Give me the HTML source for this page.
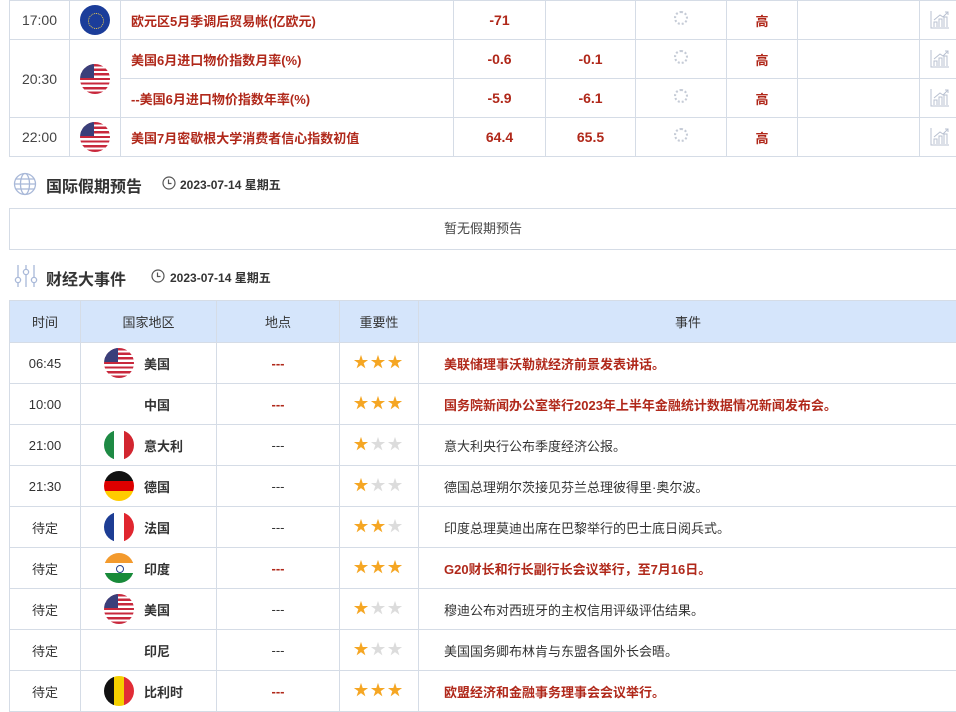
<!DOCTYPE html>
<html><head><meta charset="utf-8"><style>
*{margin:0;padding:0;box-sizing:border-box}
body{width:956px;height:712px;overflow:hidden;background:#fff;font-family:"Liberation Sans","Noto Sans CJK SC",sans-serif;font-size:13px;color:#333;position:relative}
table{border-collapse:collapse;table-layout:fixed;position:absolute;left:9px}
td,th{border:1px solid #d5dce6;text-align:center;vertical-align:middle;padding:0}
.r{color:#b0281a;font-weight:bold}
.flag{display:inline-block;width:30px;height:30px;border-radius:50%;overflow:hidden;vertical-align:middle;position:relative}
.us{background:repeating-linear-gradient(#c8283c 0 2.3px,#fff 2.3px 4.6px)}
.us:before{content:"";position:absolute;left:0;top:0;width:14px;height:14px;background:#3a3f7a}
.eu{background:#1b3d9a}
.eu:after{content:"";position:absolute;left:8px;top:8px;width:14px;height:14px;border-radius:50%;border:1px dotted #f5d24a}
.it{background:linear-gradient(90deg,#1e8a44 33%,#fff 33% 66%,#d22630 66%)}
.de{background:linear-gradient(#111 33%,#dd0000 33% 66%,#ffcc00 66%)}
.fr{background:linear-gradient(90deg,#1d3d94 33%,#fff 33% 66%,#e0262f 66%)}
.in{background:linear-gradient(#f39a2d 33%,#fff 33% 66%,#188a3a 66%)}
.in:after{content:"";position:absolute;left:12px;top:12px;width:6px;height:6px;border-radius:50%;border:1px solid #223f8a}
.be{background:linear-gradient(90deg,#111 33%,#f5d000 33% 66%,#e12c36 66%)}
.spin{display:inline-block;width:14px;height:14px;border-radius:50%;border:2px dotted #c5cbd6;margin-top:-8px}
.c{display:flex;align-items:center;padding-left:23px;gap:10px;font-weight:bold;color:#333}
.c .n{width:30px}
.st{color:#f5a623;font-size:15px;letter-spacing:2px;padding-bottom:4px}
.st i{font-style:normal;color:#dcdcdc}
.ev{text-align:left;padding-left:25px}
.hd{position:absolute;font-size:16px;font-weight:bold;color:#333}
.dt{position:absolute;font-size:12px;font-weight:bold;color:#333}
</style></head><body>
<svg width="0" height="0" style="position:absolute"><defs><symbol id="ch" viewBox="0 0 20 20"><g fill="none" stroke="#b8c0d0" stroke-width="1"><path d="M1 2V19H19"/><path d="M4 18V13H7V18M9 18V10H12V18M14 18V8H17V18"/><path d="M4 11L10 6L13 8L18 3M15 3H18V6"/></g></symbol><symbol id="ck" viewBox="0 0 14 14"><circle cx="7" cy="7" r="6" fill="none" stroke="#555" stroke-width="1.2"/><path d="M6.5 3.5V7.5H9.5" fill="none" stroke="#555" stroke-width="1.2"/></symbol></defs></svg>
<div style="position:absolute;left:9px;top:0;width:947px;height:1px;background:#d08070"></div>
<table style="top:0;width:957px">
<colgroup><col style="width:60px"><col style="width:51px"><col style="width:333px"><col style="width:92px"><col style="width:90px"><col style="width:91px"><col style="width:71px"><col style="width:122px"><col style="width:47px"></colgroup>
<tr style="height:39px"><td style="color:#444;font-size:14px">17:00</td><td><span class="flag eu"></span></td><td class="r" style="text-align:left;padding-left:10px">欧元区5月季调后贸易帐(亿欧元)</td><td class="r" style="font-size:14px">-71</td><td></td><td><span class="spin"></span></td><td class="r">高</td><td></td><td style="text-align:left;padding-left:10px"><svg width="20" height="20"><use href="#ch"/></svg></td></tr>
<tr style="height:39px"><td rowspan="2" style="color:#444;font-size:14px">20:30</td><td rowspan="2"><span class="flag us"></span></td><td class="r" style="text-align:left;padding-left:10px">美国6月进口物价指数月率(%)</td><td class="r" style="font-size:14px">-0.6</td><td class="r" style="font-size:14px">-0.1</td><td><span class="spin"></span></td><td class="r">高</td><td></td><td style="text-align:left;padding-left:10px"><svg width="20" height="20"><use href="#ch"/></svg></td></tr>
<tr style="height:39px"><td class="r" style="text-align:left;padding-left:10px">--美国6月进口物价指数年率(%)</td><td class="r" style="font-size:14px">-5.9</td><td class="r" style="font-size:14px">-6.1</td><td><span class="spin"></span></td><td class="r">高</td><td></td><td style="text-align:left;padding-left:10px"><svg width="20" height="20"><use href="#ch"/></svg></td></tr>
<tr style="height:39px"><td style="color:#444;font-size:14px">22:00</td><td><span class="flag us"></span></td><td class="r" style="text-align:left;padding-left:10px">美国7月密歇根大学消费者信心指数初值</td><td class="r" style="font-size:14px">64.4</td><td class="r" style="font-size:14px">65.5</td><td><span class="spin"></span></td><td class="r">高</td><td></td><td style="text-align:left;padding-left:10px"><svg width="20" height="20"><use href="#ch"/></svg></td></tr>
</table>
<svg style="position:absolute;left:13px;top:172px" width="24" height="24" viewBox="0 0 24 24"><g fill="none" stroke="#a8b8d8" stroke-width="1.3"><circle cx="12" cy="12" r="10.5"/><ellipse cx="12" cy="12" rx="4.5" ry="10.5"/><path d="M1.5 12H22.5M3 7H21M3 17H21"/></g></svg>
<div class="hd" style="left:46px;top:173px">国际假期预告</div>
<svg style="position:absolute;left:162px;top:176px" width="14" height="14"><use href="#ck"/></svg>
<div class="dt" style="left:180px;top:176px">2023-07-14 星期五</div>
<div style="position:absolute;left:9px;top:208px;width:947px;height:42px;border:1px solid #d5dce6;border-right:none;text-align:center;line-height:40px;color:#444">暂无假期预告</div>
<svg style="position:absolute;left:14px;top:264px" width="24" height="24" viewBox="0 0 24 24"><g fill="none" stroke="#a8b8d8" stroke-width="1.3"><path d="M4 1V13M4 19V23M12 1V5M12 11V23M20 1V13M20 19V23"/><circle cx="4" cy="16" r="2.6"/><circle cx="12" cy="8" r="2.6"/><circle cx="20" cy="16" r="2.6"/></g></svg>
<div class="hd" style="left:46px;top:266px">财经大事件</div>
<svg style="position:absolute;left:151px;top:269px" width="14" height="14"><use href="#ck"/></svg>
<div class="dt" style="left:170px;top:269px">2023-07-14 星期五</div>
<table style="top:300px;width:948px">
<colgroup><col style="width:71px"><col style="width:136px"><col style="width:123px"><col style="width:79px"><col style="width:539px"></colgroup>
<tr style="height:42px;background:#d5e5fb"><th style="font-weight:normal;color:#333">时间</th><th style="font-weight:normal">国家地区</th><th style="font-weight:normal">地点</th><th style="font-weight:normal">重要性</th><th style="font-weight:normal">事件</th></tr>
<tr style="height:41px"><td>06:45</td><td><div class="c"><span class="flag us"></span>美国</div></td><td class="r">---</td><td class="st">★★★</td><td class="ev r">美联储理事沃勒就经济前景发表讲话。</td></tr>
<tr style="height:41px"><td>10:00</td><td><div class="c"><span class="n"></span>中国</div></td><td class="r">---</td><td class="st">★★★</td><td class="ev r">国务院新闻办公室举行2023年上半年金融统计数据情况新闻发布会。</td></tr>
<tr style="height:41px"><td>21:00</td><td><div class="c"><span class="flag it"></span>意大利</div></td><td>---</td><td class="st">★<i>★★</i></td><td class="ev">意大利央行公布季度经济公报。</td></tr>
<tr style="height:41px"><td>21:30</td><td><div class="c"><span class="flag de"></span>德国</div></td><td>---</td><td class="st">★<i>★★</i></td><td class="ev">德国总理朔尔茨接见芬兰总理彼得里·奥尔波。</td></tr>
<tr style="height:41px"><td>待定</td><td><div class="c"><span class="flag fr"></span>法国</div></td><td>---</td><td class="st">★★<i>★</i></td><td class="ev">印度总理莫迪出席在巴黎举行的巴士底日阅兵式。</td></tr>
<tr style="height:41px"><td>待定</td><td><div class="c"><span class="flag in"></span>印度</div></td><td class="r">---</td><td class="st">★★★</td><td class="ev r">G20财长和行长副行长会议举行，至7月16日。</td></tr>
<tr style="height:41px"><td>待定</td><td><div class="c"><span class="flag us"></span>美国</div></td><td>---</td><td class="st">★<i>★★</i></td><td class="ev">穆迪公布对西班牙的主权信用评级评估结果。</td></tr>
<tr style="height:41px"><td>待定</td><td><div class="c"><span class="n"></span>印尼</div></td><td>---</td><td class="st">★<i>★★</i></td><td class="ev">美国国务卿布林肯与东盟各国外长会晤。</td></tr>
<tr style="height:41px"><td>待定</td><td><div class="c"><span class="flag be"></span>比利时</div></td><td class="r">---</td><td class="st">★★★</td><td class="ev r">欧盟经济和金融事务理事会会议举行。</td></tr>
</table>
</body></html>
